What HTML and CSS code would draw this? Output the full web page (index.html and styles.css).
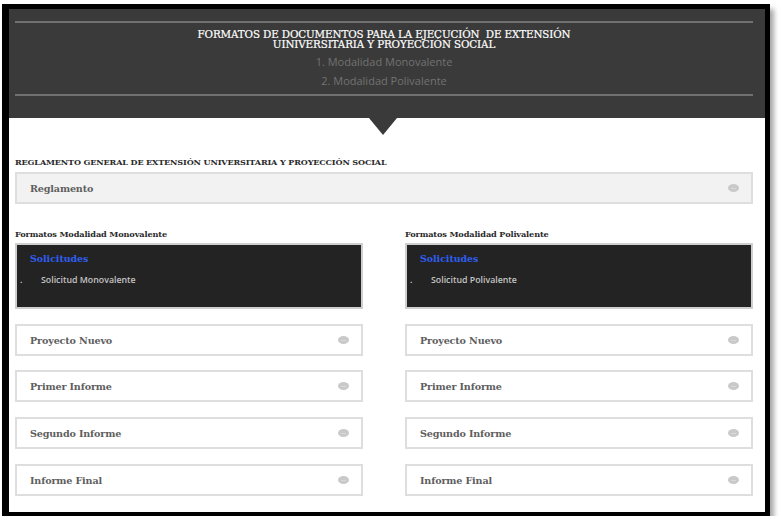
FILE: index.html
```html
<!DOCTYPE html>
<html lang="es">
<head>
<meta charset="utf-8">
<title>Formatos de documentos</title>
<link rel="stylesheet" href="styles.css">
</head>
<body>
<div class="frame">
  <header class="hero">
    <div class="rule"></div>
    <h1 class="title">FORMATOS DE DOCUMENTOS PARA LA EJECUCIÓN&nbsp; DE EXTENSIÓN<br>UINIVERSITARIA Y PROYECCIÓN SOCIAL</h1>
    <p class="sub sub-first">1. Modalidad Monovalente</p>
    <p class="sub">2. Modalidad Polivalente</p>
    <div class="rule rule-bottom"></div>
  </header>
  <main class="content">
    <h2 class="label label-top">REGLAMENTO GENERAL DE EXTENSIÓN UNIVERSITARIA Y PROYECCIÓN SOCIAL</h2>
    <div class="item item-grey"><span>Reglamento</span><i class="dot"></i></div>
    <div class="cols">
      <section class="col">
        <h3 class="label">Formatos Modalidad Monovalente</h3>
        <div class="dark">
          <div class="dark-title">Solicitudes</div>
          <div class="dark-row"><span class="bullet">.</span><span>Solicitud Monovalente</span></div>
        </div>
        <div class="item first"><span>Proyecto Nuevo</span><i class="dot"></i></div>
        <div class="item gap14"><span>Primer Informe</span><i class="dot"></i></div>
        <div class="item"><span>Segundo Informe</span><i class="dot"></i></div>
        <div class="item"><span>Informe Final</span><i class="dot"></i></div>
      </section>
      <section class="col">
        <h3 class="label">Formatos Modalidad Polivalente</h3>
        <div class="dark">
          <div class="dark-title">Solicitudes</div>
          <div class="dark-row"><span class="bullet">.</span><span>Solicitud Polivalente</span></div>
        </div>
        <div class="item first"><span>Proyecto Nuevo</span><i class="dot"></i></div>
        <div class="item gap14"><span>Primer Informe</span><i class="dot"></i></div>
        <div class="item"><span>Segundo Informe</span><i class="dot"></i></div>
        <div class="item"><span>Informe Final</span><i class="dot"></i></div>
      </section>
    </div>
  </main>
</div>
</body>
</html>
```

FILE: styles.css
```css
* { box-sizing: border-box; }
html, body { margin: 0; padding: 0; background: #fff; }
body { padding: 4px 0 0 2px; }

.frame {
  width: 768px;
  height: 512px;
  border-style: solid;
  border-color: #000;
  border-width: 5px 5px 4px 7px;
  background: #fff;
  box-shadow: 4px 5px 5px rgba(0,0,0,0.35);
  overflow: hidden;
}

.hero {
  position: relative;
  background: #3a3a3a;
  height: 109px;
  padding: 12px 12px 0 6px;
  text-align: center;
}
.hero::after {
  content: "";
  position: absolute;
  left: 360px;
  top: 109px;
  border-top: 17px solid #3a3a3a;
  border-left: 14px solid transparent;
  border-right: 14px solid transparent;
}
.rule { height: 2px; background: #707070; }
.rule-bottom { margin-top: 4px; }

.title {
  margin: 7px 0 0;
  font-family: "DejaVu Serif", serif;
  font-weight: normal;
  font-size: 10.3px;
  line-height: 9.5px;
  color: #fff;
  letter-spacing: -0.1px;
  -webkit-text-stroke: 0.2px #fff;
}
.sub {
  margin: 1px 0 0;
  font-family: "Open Sans", sans-serif;
  font-size: 11px;
  line-height: 18px;
  color: #727272;
}
.sub-first { margin-top: 4px; }

.content { padding: 38px 12px 0 6px; }

.label {
  margin: 0;
  font-family: "DejaVu Serif", serif;
  font-weight: bold;
  font-size: 8.1px;
  line-height: 12px;
  color: #2a2a2a;
  letter-spacing: -0.15px;
}

.item {
  display: flex;
  align-items: center;
  justify-content: space-between;
  height: 32px;
  margin-top: 15px;
  padding: 0 12px 0 13px;
  border: 2px solid #dedede;
  background: #fff;
  font-family: "DejaVu Serif", serif;
  font-weight: bold;
  font-size: 9.6px;
  color: #5e5e5e;
  letter-spacing: -0.15px;
}
.item-grey { margin-top: 4px; background: #f2f2f2; }
.item.first { margin-top: 15px; }
.item.gap14 { margin-top: 14px; }

.dot {
  position: relative;
  width: 11px;
  height: 8px;
  border-radius: 50%;
  background: #c9c9c9;
}
.dot::after {
  content: "";
  position: absolute;
  left: 3px;
  right: 3px;
  top: 3.5px;
  height: 1px;
  background: #d8d8d8;
}

.cols {
  display: grid;
  grid-template-columns: 348px 348px;
  column-gap: 42px;
  margin-top: 24px;
}
.col .label { font-size: 8.2px; }

.dark {
  margin-top: 3px;
  height: 66px;
  background: #232323;
  border: 2px solid #cfcfcf;
  padding: 9px 0 0 2px;
}
.dark-title {
  padding-left: 11px;
  font-family: "DejaVu Serif", serif;
  font-weight: bold;
  font-size: 9.4px;
  line-height: 10px;
  color: #2f5ef2;
}
.dark-row {
  display: flex;
  margin-top: 11px;
  font-family: "Open Sans", sans-serif;
  font-weight: 600;
  font-size: 8.8px;
  line-height: 10px;
  color: #c4c4c4;
}
.bullet { width: 22px; padding-left: 1px; color: #ddd; }
```
